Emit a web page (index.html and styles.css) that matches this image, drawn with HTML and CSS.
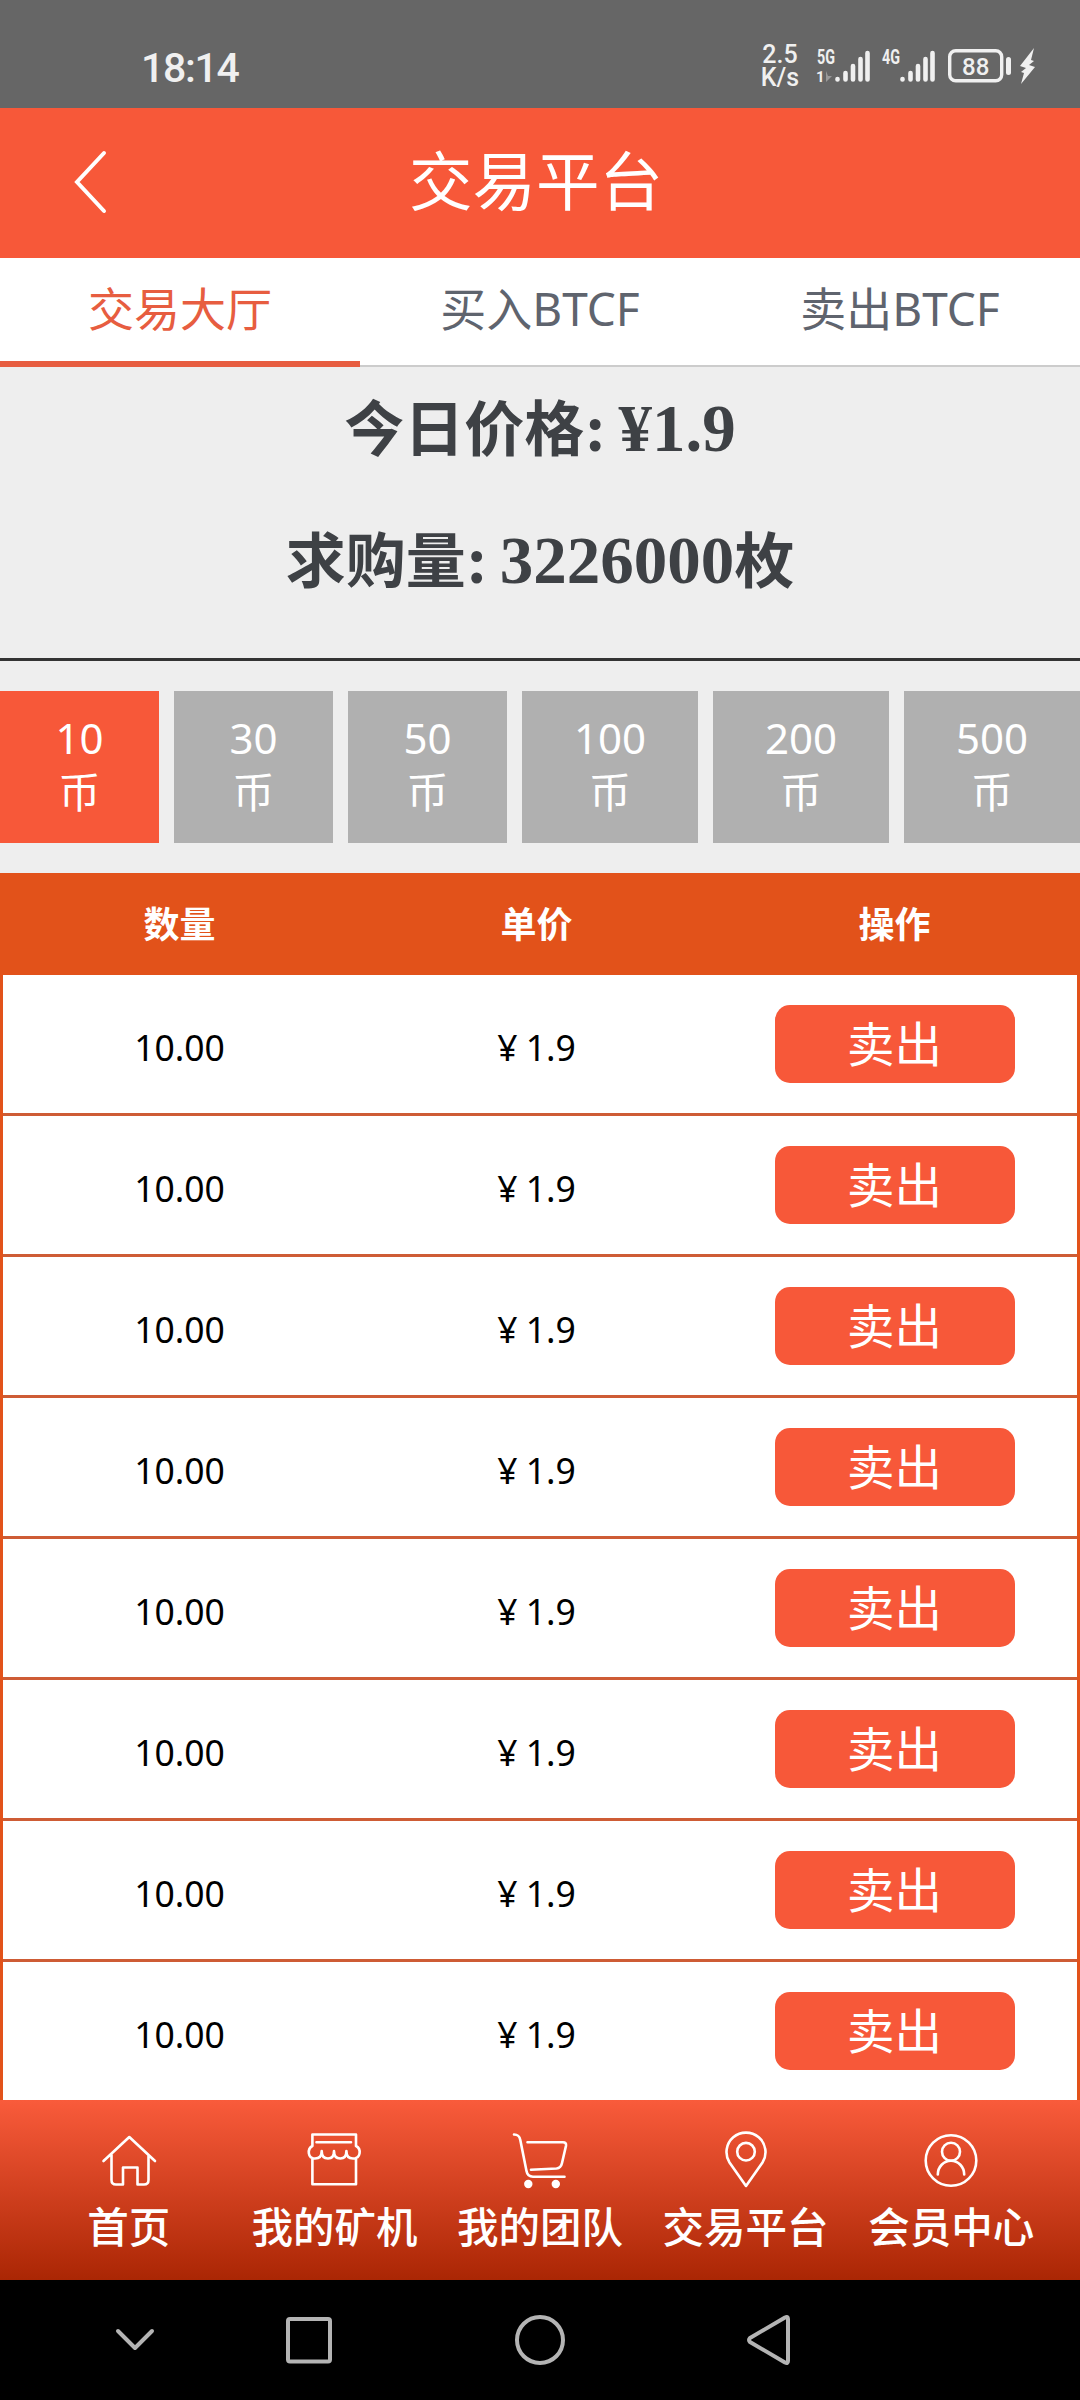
FILE: index.html
```html
<!DOCTYPE html>
<html lang="zh-CN">
<head>
    <meta charset="UTF-8">
    <meta name="viewport" content="width=device-width, initial-scale=1.0">
    <title>交易平台</title>
    <link rel="stylesheet" href="styles.css">
</head>
<body>
    <div class="status-bar">
        <span class="time">18:14</span>
        <div class="speed"><span>2.5</span><span>K/s</span></div>
        <svg class="signal signal-5g" width="54" height="36" viewBox="0 0 54 36">
            <text class="net" x="0" y="15.5" textLength="18" lengthAdjust="spacingAndGlyphs">5G</text>
            <text class="sim" x="-1" y="34">1</text>
            <path class="arrow" d="M9 23v11l6-6h-4z"/>
            <path class="bars" d="M20.5 31v0.5M28.5 25v6.5M36 18v13.5M43.5 11v20.5M50.5 5v26.5"/>
        </svg>
        <svg class="signal signal-4g" width="54" height="36" viewBox="0 0 54 36">
            <text class="net" x="0" y="15.5" textLength="18" lengthAdjust="spacingAndGlyphs">4G</text>
            <path class="bars" d="M20.5 31v0.5M28.5 25v6.5M36 18v13.5M43.5 11v20.5M50.5 5v26.5"/>
        </svg>
        <svg class="battery" width="88" height="36" viewBox="0 0 88 36">
            <rect x="1.7" y="2.7" width="52" height="30" rx="6" fill="none" stroke="#f0f0f0" stroke-width="3.4"/>
            <rect x="58" y="9" width="5" height="18" rx="2.5"/>
            <text class="level" x="27.7" y="26.5" text-anchor="middle">88</text>
            <path d="M86 0L72 18l6 2-5 4 3 1-3 11 14-17-6-2 5-4-3-1z"/>
        </svg>
    </div>

    <header>
        <svg class="back" width="34" height="64" viewBox="0 0 34 64">
            <path d="M31 3L4 32L31 61"/>
        </svg>
        <h1>交易平台</h1>
    </header>

    <div class="tabs">
        <a class="tab active">交易大厅</a>
        <a class="tab">买入BTCF</a>
        <a class="tab">卖出BTCF</a>
    </div>

    <div class="summary">
        <h2>今日价格<span class="num">: ¥1.9</span></h2>
        <h2>求购量<span class="num">: 3226000</span>枚</h2>
    </div>

    <div class="coins">
        <div class="coin active">10<br>币</div>
        <div class="coin">30<br>币</div>
        <div class="coin">50<br>币</div>
        <div class="coin">100<br>币</div>
        <div class="coin">200<br>币</div>
        <div class="coin">500<br>币</div>
    </div>

    <div class="list">
        <div class="row head"><span>数量</span><span>单价</span><span>操作</span></div>
        <div class="row"><span class="cell">10.00</span><span class="cell">¥ 1.9</span><span><button class="sell">卖出</button></span></div>
        <div class="row"><span class="cell">10.00</span><span class="cell">¥ 1.9</span><span><button class="sell">卖出</button></span></div>
        <div class="row"><span class="cell">10.00</span><span class="cell">¥ 1.9</span><span><button class="sell">卖出</button></span></div>
        <div class="row"><span class="cell">10.00</span><span class="cell">¥ 1.9</span><span><button class="sell">卖出</button></span></div>
        <div class="row"><span class="cell">10.00</span><span class="cell">¥ 1.9</span><span><button class="sell">卖出</button></span></div>
        <div class="row"><span class="cell">10.00</span><span class="cell">¥ 1.9</span><span><button class="sell">卖出</button></span></div>
        <div class="row"><span class="cell">10.00</span><span class="cell">¥ 1.9</span><span><button class="sell">卖出</button></span></div>
        <div class="row"><span class="cell">10.00</span><span class="cell">¥ 1.9</span><span><button class="sell">卖出</button></span></div>
    </div>

    <nav>
        <a class="nav-item">
            <svg width="60" height="60" viewBox="0 0 60 60">
                <path d="M4.5 31L30.3 7L56 31M12.5 25V50q0 4.5 4.5 4.5H24V37.5H38.5V54.5H45q4.5 0 4.5-4.5V25"/>
            </svg>
            <span>首页</span>
        </a>
        <a class="nav-item">
            <svg width="60" height="60" viewBox="0 0 60 60">
                <path d="M8.4 16V4.5H52V16M12.5 12.3H47M8.4 16C3 19 3.5 28.5 11 28.5C15 28.5 17.7 26 17.7 21C17.7 26 20 28.5 24 28.5S30 26 30 21C30 26 32.5 28.5 36.3 28.5S42.4 26 42.4 21C42.4 26 45 28.5 49 28.5C57 28.5 57.5 19 52 16M8.4 28V54.3H52V28"/>
            </svg>
            <span>我的矿机</span>
        </a>
        <a class="nav-item">
            <svg width="60" height="60" viewBox="0 0 60 60">
                <path d="M4 4.5C8 4.5 9.5 6 10.3 10L16.5 41Q17.5 46.7 23 46.7H54.5M17.5 12.3H53Q56.5 12.3 56 15.8L52 33Q51 38 46.5 38.5L21 39.8"/>
                <circle class="wheel" cx="18.3" cy="54" r="4.2"/>
                <circle class="wheel" cx="45.8" cy="54" r="4.2"/>
            </svg>
            <span>我的团队</span>
        </a>
        <a class="nav-item">
            <svg width="60" height="60" viewBox="0 0 60 60">
                <path d="M30 56L13.5 32.5A19.5 19.5 0 1 1 46.5 32.5Z"/>
                <circle cx="30" cy="21.7" r="8.8"/>
            </svg>
            <span>交易平台</span>
        </a>
        <a class="nav-item">
            <svg width="60" height="60" viewBox="0 0 60 60">
                <circle cx="30" cy="30.5" r="25.3"/>
                <circle cx="30" cy="21.7" r="9"/>
                <path d="M16.8 44.5a13.2 13.8 0 0 1 26.4 0"/>
            </svg>
            <span>会员中心</span>
        </a>
    </nav>

    <div class="system-bar">
        <svg width="1080" height="120" viewBox="0 0 1080 120">
            <path d="M118 51L135 68L152 51"/>
            <rect x="288" y="39" width="42" height="42.5" rx="2"/>
            <circle cx="540" cy="60" r="23"/>
            <path d="M785 37.5Q788 36 788 39V81Q788 84 785 82.5L750 62Q748 60 750 58Z"/>
        </svg>
    </div>
</body>
</html>
```
FILE: styles.css
```css
* {
    box-sizing: border-box;
}

body {
    margin: 0;
    width: 1080px;
    font-family: "Noto Sans", "Noto Sans CJK SC", sans-serif;
    background-color: #eee;
}

h1, h2 {
    margin: 0;
}

/* Status bar */
.status-bar {
    display: flex;
    align-items: flex-start;
    height: 108px;
    padding: 48px 44px 0 141px;
    background-color: #666;
    color: #f0f0f0;
    font-family: Roboto, sans-serif;
    fill: #f0f0f0;
}

.status-bar svg {
    overflow: visible;
}

.time {
    flex: 1;
    font-size: 41px;
    font-weight: 500;
    line-height: 40px;
    letter-spacing: -1.3px;
}

.speed {
    display: flex;
    flex-direction: column;
    align-items: center;
    width: 38px;
    margin-top: -5px;
    font-size: 25px;
    font-weight: 500;
    line-height: 23px;
}

.signal-5g {
    margin-left: 18px;
}

.signal-4g {
    margin-left: 11px;
}

.battery {
    margin-left: 12px;
}

.net {
    font-size: 21px;
    font-weight: 700;
}

.sim {
    font-size: 15px;
    font-weight: 700;
}

.arrow {
    fill: #999;
}

.bars {
    fill: none;
    stroke: #f0f0f0;
    stroke-width: 4.6;
    stroke-linecap: round;
}

.level {
    font-size: 24px;
    font-weight: 500;
}

/* Header */
header {
    display: flex;
    align-items: center;
    height: 150px;
    padding: 0 115px 0 73px;
    background-color: #f75839;
    color: white;
}

.back {
    margin-bottom: 2px;
    fill: none;
    stroke: white;
    stroke-width: 4;
    stroke-linecap: round;
}

header h1 {
    flex: 1;
    padding-bottom: 5px;
    font-size: 63.5px;
    font-weight: 400;
    line-height: 90px;
    text-align: center;
}

/* Tabs */
.tabs {
    display: flex;
    height: 109px;
    background-color: white;
}

.tab {
    flex: 1;
    border-bottom: 2px solid #ccc;
    color: #5f646e;
    font-size: 46px;
    line-height: 100px;
    text-align: center;
}

.tab.active {
    border-bottom: 6px solid #e75d40;
    color: #e75d40;
}

/* Price and volume */
.summary {
    height: 294px;
    padding-top: 16px;
    border-bottom: 3px solid #333;
    color: #3e4145;
}

.summary h2 {
    height: 132px;
    font-size: 60px;
    font-weight: 700;
    line-height: 90px;
    text-align: center;
}

.num {
    font-family: "Liberation Serif", serif;
    font-size: 67px;
    word-spacing: -5px;
}

/* Amount buttons */
.coins {
    display: grid;
    grid-template-columns: 159px 159px 159px 176px 176px 176px;
    gap: 15px;
    padding: 30px 0;
}

.coin {
    height: 152px;
    padding-top: 20px;
    background-color: #b0b0b0;
    color: white;
    font-size: 42px;
    line-height: 54px;
    text-align: center;
}

.coin.active {
    background-color: #f75839;
}

/* Orders */
.list {
    height: 1227px;
    overflow: hidden;
    border: 3px solid #e2521a;
    border-width: 0 3px;
    background-color: white;
}

.row {
    display: grid;
    grid-template-columns: 353px 361px 355px;
    align-items: center;
    height: 141px;
    border-bottom: 3px solid #ce5c35;
    font-size: 36px;
    text-align: center;
}

.row.head {
    height: 102px;
    padding-bottom: 4px;
    border: none;
    background-color: #e2521a;
    color: white;
    font-weight: 700;
}

.cell {
    padding-top: 6px;
    font-size: 35.5px;
    word-spacing: -1px;
}

.sell {
    display: block;
    width: 240px;
    height: 78px;
    margin: 0 auto;
    padding: 0 0 1px;
    border: none;
    border-radius: 15px;
    background-color: #f75839;
    color: white;
    font-family: inherit;
    font-size: 47.5px;
    line-height: 77px;
}

/* Bottom navigation */
nav {
    display: flex;
    height: 180px;
    padding: 30px 26px 0;
    background: linear-gradient(#f95b3b, #aa2604);
    color: white;
}

.nav-item {
    display: flex;
    flex: 1;
    flex-direction: column;
    align-items: center;
    font-size: 41.5px;
    font-weight: 500;
    line-height: 60px;
    white-space: nowrap;
}

.nav-item svg {
    margin-bottom: 7px;
    fill: none;
    stroke: white;
    stroke-width: 2.6;
    stroke-linecap: round;
    stroke-linejoin: round;
}

.nav-item .wheel {
    fill: white;
    stroke: none;
}

/* Android keys */
.system-bar {
    height: 120px;
    background-color: black;
}

.system-bar svg {
    display: block;
    fill: none;
    stroke: #b4b4b4;
    stroke-width: 4;
    stroke-linecap: round;
    stroke-linejoin: round;
}
```
